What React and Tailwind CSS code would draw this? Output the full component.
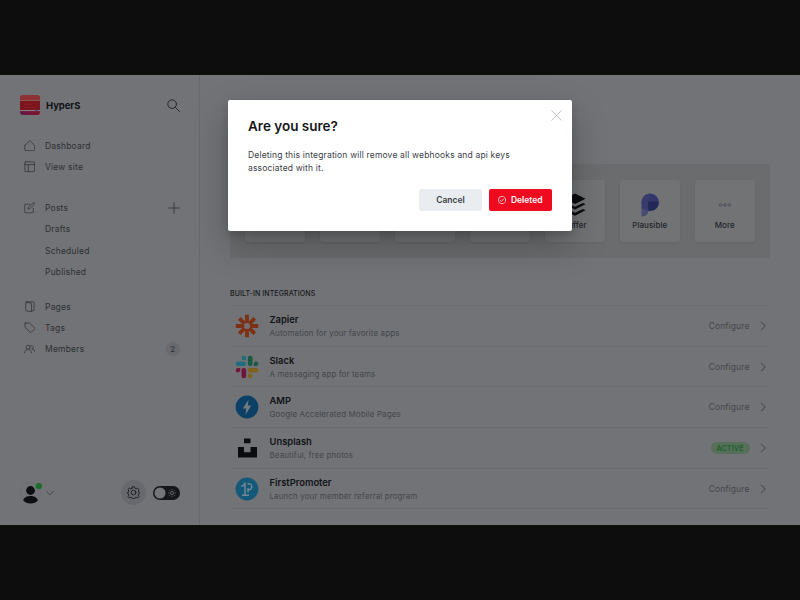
import React from "react";

function Icon({ size = 12, box = 24, sw = 1.5, className = "", children }) {
  return (
    <svg
      width={size}
      height={size}
      viewBox={`0 0 ${box} ${box}`}
      fill="none"
      stroke="currentColor"
      strokeWidth={sw}
      strokeLinecap="round"
      strokeLinejoin="round"
      className={`block shrink-0 ${className}`}
    >
      {children}
    </svg>
  );
}

const HomeIcon = () => (
  <Icon size={11.5}>
    <path d="M2.500 10.500 L10.500 2.600 a2.100 2.100 0 0 1 3 0 L21.500 10.500 a2 2 0 0 1 .8 1.600 V20 a2.300 2.300 0 0 1-2.300 2.300 H4 A2.300 2.300 0 0 1 1.700 20 V12.100 a2 2 0 0 1 .8-1.600z" />
  </Icon>
);
const LayoutIcon = () => (
  <Icon size={11.5}>
    <rect x="1.800" y="1.800" width="20.400" height="20.400" rx="2" />
    <path d="M1.800 7.500h20.400M9 7.500v14.700" />
  </Icon>
);
const PostIcon = () => (
  <Icon size={11.5}>
    <path d="M19.500 13v8a1.500 1.500 0 0 1-1.500 1.500H3A1.500 1.500 0 0 1 1.500 21V6A1.500 1.500 0 0 1 3 4.500h8.500" />
    <path d="M9.500 14.500l-1 0.500 1-4.500L19 1.800a1.800 1.800 0 0 1 2.700 2.500L12.500 13.500z" />
  </Icon>
);
const PagesIcon = () => (
  <Icon size={11.5}>
    <path d="M4.500 2.800l9.500 1.400a2 2 0 0 1 1.700 2V22.500l-10-1.600A2.200 2.200 0 0 1 3.500 18.700V3.500" />
    <path d="M4.500 1.800h14.500A2 2 0 0 1 21 3.800v14.900a2 2 0 0 1-2 2h-3.300" />
  </Icon>
);
const TagIcon = () => (
  <Icon size={11.5}>
    <path d="M3 2h7.500a2.500 2.500 0 0 1 1.700.7l9.800 10a1.500 1.500 0 0 1 0 2.100l-6.700 6.700a1.500 1.500 0 0 1-2.100 0L2.700 11.500a2.500 2.500 0 0 1-.7-1.700V3a1 1 0 0 1 1-1z" />
  </Icon>
);
const MembersIcon = () => (
  <Icon size={11.5}>
    <circle cx="8.500" cy="8.800" r="4.200" />
    <path d="M1 20.500c.3-4.400 3.300-6.800 7.500-6.800s7 2.400 7.300 6.800" />
    <path d="M14 5.500a3.700 3.700 0 1 1 2.200 7c4 0 6.500 2.500 6.800 6.500" />
  </Icon>
);

function NavItem({ icon, label, children }) {
  return (
    <div className="flex h-[21.2px] items-center text-[#2d3034]">
      <div className="w-[21.500px]">{icon}</div>
      <span className="flex-1 pt-[1.2px] text-[8.5px] tracking-[0.2px]">{label}</span>
      {children}
    </div>
  );
}

function Sidebar() {
  return (
    <aside className="flex w-[200px] shrink-0 flex-col border-r border-[#68696b] pt-5 pr-[19px] pl-5">
      <div className="flex h-5 items-center">
        <svg width="20" height="20" viewBox="0 0 20 20" className="block">
          <defs>
            <clipPath id="logo">
              <rect width="20" height="20" rx="3.500" />
            </clipPath>
            <linearGradient id="logobase" x1="0" x2="1">
              <stop offset="0" stopColor="#5d174b" />
              <stop offset="1" stopColor="#88132c" />
            </linearGradient>
          </defs>
          <g clipPath="url(#logo)">
            <rect width="20" height="20" fill="#87252b" />
            <rect width="20" height="5" fill="#8c3134" />
            <rect y="5" width="20" height="1" fill="#8c5855" />
            <rect y="6" width="20" height="9" fill="#7d151d" />
            <rect x="4" y="9" width="8" height="1" fill="#821e25" />
            <rect x="4" y="12" width="12" height="1" fill="#821e25" />
            <rect y="15" width="20" height="1.200" fill="#888088" />
            <rect x="15" y="15" width="3" height="1.200" fill="#355a9d" />
            <rect y="16.200" width="20" height="4" fill="url(#logobase)" />
          </g>
        </svg>
        <span className="ml-[6px] flex-1 pt-[1.5px] text-[9.5px] font-bold tracking-[-0.05px] text-[#111216]">HyperS</span>
        <Icon size={13} sw={1.700} className="text-[#202125]">
          <circle cx="9.500" cy="9.500" r="8" />
          <path d="M15.500 15.500l7.500 7.500" />
        </Icon>
      </div>
      <nav className="mt-[20px] pl-[3.500px]">
        <NavItem icon={<HomeIcon />} label="Dashboard" />
        <NavItem icon={<LayoutIcon />} label="View site" />
        <div className="h-5" />
        <NavItem icon={<PostIcon />} label="Posts">
          <Icon size={12} sw={1.700} className="text-[#303236]">
            <path d="M12 1.500v21M1.500 12h21" />
          </Icon>
        </NavItem>
        <NavItem label="Drafts" />
        <NavItem label="Scheduled" />
        <NavItem label="Published" />
        <div className="h-[13.800px]" />
        <NavItem icon={<PagesIcon />} label="Pages" />
        <NavItem icon={<TagIcon />} label="Tags" />
        <NavItem icon={<MembersIcon />} label="Members">
          <span className="flex h-[14.500px] w-[14.500px] items-center justify-center rounded-full bg-[#696a6d] pt-px text-[8px]">2</span>
        </NavItem>
      </nav>
      <div className="mt-auto mb-5 flex h-[25px] items-center">
        <svg width="22" height="22" viewBox="0 0 22 22" className="block shrink-0">
          <circle cx="10.500" cy="11" r="10.300" fill="none" stroke="#6c6d70" strokeWidth=".8" />
          <circle cx="10.500" cy="8.500" r="4.400" fill="#0d0e12" />
          <path d="M3.200 18.200c1.600-5.600 13-5.600 14.700 0-3.200 4.300-11.400 4.300-14.700 0z" fill="#0d0e12" />
          <circle cx="18.800" cy="4.100" r="3.200" fill="#1b6e2b" />
        </svg>
        <Icon size={8} sw={2.500} className="ml-1 text-[#3b3d41]">
          <path d="M2 7.500l10 10 10-10" />
        </Icon>
        <div className="ml-auto flex h-[25px] w-[25px] items-center justify-center rounded-full bg-[#68696e] text-[#191b20]">
          <Icon size={13} sw={1.700}>
            <circle cx="12" cy="12" r="4.300" />
            <path d="M10 1.500h4l1 3 1.800.8 2.800-1.400 2.500 2.500-1.400 2.800.8 1.800 1 .3v3.400l-1 .3-.8 1.800 1.400 2.800-2.500 2.500-2.800-1.400-1.800.8-1 2h-4l-1-2-1.800-.8-2.800 1.400-2.500-2.500 1.400-2.800-.8-1.800-1-.3v-3.400l1-.3.8-1.800-1.400-2.800 2.500-2.500 2.800 1.400L9 4.500z" />
          </Icon>
        </div>
        <svg width="27" height="14" viewBox="0 0 27 14" className="ml-[7px] block shrink-0">
          <rect width="27" height="14" rx="7" fill="#15161a" />
          <circle cx="7" cy="7" r="5.500" fill="#747579" />
          <circle cx="19" cy="7" r="1.500" fill="none" stroke="#66676a" strokeWidth=".9" />
          <path d="M19 3v1.400M19 9.600V11M15 7h1.400M21.600 7H23M16.200 4.200l1 1M20.800 8.800l1 1M21.800 4.200l-1 1M17.200 8.800l-1 1" stroke="#66676a" strokeWidth=".8" />
        </svg>
      </div>
    </aside>
  );
}

function Tile({ children, label }) {
  return (
    <div className="flex h-[62px] w-[59.500px] flex-col items-center rounded-[3px] bg-[#727375] pt-[11.500px] shadow-[0_1px_2px_rgba(0,0,0,0.08)]">
      <div className="flex h-[26px] items-center">{children}</div>
      <span className="text-[8px] leading-[14px] font-medium tracking-[0.05px] text-[#222429]">{label}</span>
    </div>
  );
}

const ZapierLogo = () => (
  <svg width="24" height="24" viewBox="-12 -12 24 24" className="block">
    <g stroke="#7e3014" strokeWidth="3.800">
      <path d="M0-11.200V-2.500M0 11.200V2.500M-11.200 0H-2.500M11.200 0H2.500M-7.700-7.700l5.500 5.500M7.700 7.700l-5.500-5.500M7.700-7.700l-5.500 5.500M-7.700 7.700l5.500-5.500" />
    </g>
    <path d="M-2.700-1.300L-1.300-2.700H1.300L2.700-1.300V1.300L1.300 2.700H-1.300L-2.700 1.300z" fill="#707174" />
  </svg>
);

const SlackLogo = () => (
  <svg width="24" height="24" viewBox="0 0 24 24" className="block">
    <g fill="#206d80">
      <rect x=".8" y="6.500" width="10.200" height="4.500" rx="2.200" />
      <path d="M11 5.200H8.700A2.200 2.200 0 1 1 11 3z" />
    </g>
    <g fill="#175b42">
      <rect x="12.900" y=".8" width="4.600" height="10.200" rx="2.200" />
      <path d="M18.800 11V8.700A2.200 2.200 0 1 1 21 11z" />
    </g>
    <g fill="#7d6019">
      <rect x="13" y="13" width="10.200" height="4.500" rx="2.200" />
      <path d="M13 18.800h2.300A2.200 2.200 0 1 1 13 21z" />
    </g>
    <g fill="#70143a">
      <rect x="6.500" y="13" width="4.600" height="10.200" rx="2.200" />
      <path d="M5.200 13v2.300A2.200 2.200 0 1 1 3 13z" />
    </g>
  </svg>
);

const AmpLogo = () => (
  <svg width="24" height="24" viewBox="0 0 24 24" className="block">
    <circle cx="12" cy="12" r="11.400" fill="#0b4166" />
    <path d="M13.500 4.800L7.800 13.500h3.400l-.7 6.200 5.700-9.200h-3.400z" fill="#77797c" />
  </svg>
);

const UnsplashLogo = () => (
  <svg width="24" height="24" viewBox="0 0 24 24" className="block">
    <path d="M9 2.500h6.500v4.800H9zM3 11h6v5.300h6.500V11h6.500V21.500H3z" fill="#0b0c0f" />
  </svg>
);

const PromoterLogo = () => (
  <svg width="24" height="24" viewBox="0 0 24 24" className="block">
    <circle cx="12" cy="12" r="11.400" fill="#14587a" />
    <g fill="none" stroke="#75888f" strokeWidth="1.500">
      <path d="M6.200 9.300c2.400-.3 3.500-1.600 3.800-3.600v12.200M7 18.200h7" />
      <path d="M13 15.500V11M12.500 6.800c5.500-1.300 5.500 6.700.8 6" />
    </g>
  </svg>
);

const integrations = [
  { name: "Zapier", text: "Automation for your favorite apps", logo: <ZapierLogo /> },
  { name: "Slack", text: "A messaging app for teams", logo: <SlackLogo /> },
  { name: "AMP", text: "Google Accelerated Mobile Pages", logo: <AmpLogo /> },
  { name: "Unsplash", text: "Beautiful, free photos", logo: <UnsplashLogo />, active: true },
  { name: "FirstPromoter", text: "Launch your member referral program", logo: <PromoterLogo /> },
];

function Row({ item }) {
  return (
    <div className="flex h-[40.700px] items-center border-t border-[#6c6d70] pr-[2px] pl-[5px]">
      {item.logo}
      <div className="ml-[10.500px] flex-1">
        <div className="text-[9.4px] leading-[15px] font-semibold text-[#111216]">{item.name}</div>
        <div className="text-[8px] leading-[13px] tracking-[0.100px] text-[#43474d]">{item.text}</div>
      </div>
      {item.active ? (
        <span className="flex h-[12px] w-[39px] items-center justify-center rounded-full bg-[#566f5a] pt-px text-[7.6px] font-medium text-[#175f26]">ACTIVE</span>
      ) : (
        <span className="pt-[1.2px] text-[8.5px] tracking-[0.120px] text-[#43474d]">Configure</span>
      )}
      <Icon size={10} sw={1.900} className="ml-[8px] text-[#35373b]">
        <path d="M8 2.500l9.500 9.500L8 21.500" />
      </Icon>
    </div>
  );
}

function Main() {
  return (
    <main className="flex-1 pt-[89px] pr-[30.500px] pl-[30px]">
      <div className="flex h-[93.5px] justify-between bg-[#6b6c6e] px-[15px] pt-4">
        <Tile />
        <Tile />
        <Tile />
        <Tile />
        <Tile label="Buffer">
          <svg width="22" height="24" viewBox="0 0 22 24" className="block" fill="#0c0d10">
            <path d="M11 .5l10.500 5.200L11 11 .5 5.700zM.5 11.200l2.600-1.300L11 13.700l7.900-3.800 2.600 1.300L11 16.600zM.5 17.300L3.100 16l7.900 3.800 7.900-3.800 2.600 1.300L11 22.800z" />
          </svg>
        </Tile>
        <Tile label="Plausible">
          <svg width="18" height="24" viewBox="0 0 18 24" className="block">
            <path d="M.5 16.500V23.500c4.300 0 7-2.500 7-6.500z" fill="#464a75" />
            <circle cx="9.200" cy="9.200" r="8.600" fill="#32366b" />
            <path d="M.5 16.500V9.200A8.600 8.600 0 0 1 9 .6L7.500 17c-2.600-.5-4.600-.7-7-.5z" fill="#383c6d" />
            <path d="M7 8.500h10.800a8.600 8.600 0 0 1-10.300 9.200z" fill="#242858" />
          </svg>
        </Tile>
        <Tile label="More">
          <svg width="14" height="6" viewBox="0 0 14 6" className="block" fill="none" stroke="#4e515e" strokeWidth="1">
            <circle cx="2.600" cy="3" r="1.300" />
            <circle cx="7" cy="3" r="1.300" />
            <circle cx="11.400" cy="3" r="1.300" />
          </svg>
        </Tile>
      </div>
      <h2 className="mt-[30.5px] h-[17px] text-[7px] leading-[11px] font-medium tracking-[0.100px] text-[#17181c]">BUILT-IN INTEGRATIONS</h2>
      <div className="border-b border-[#6c6d70]">
        {integrations.map((item) => (
          <Row key={item.name} item={item} />
        ))}
      </div>
    </main>
  );
}

function Dialog() {
  return (
    <div
      role="dialog"
      className="absolute top-[25px] left-[228px] flex h-[131px] w-[344px] flex-col rounded-[2px] bg-white pt-[18px] pr-5 pl-5 shadow-[0_4px_8px_rgba(0,0,0,0.15),0_14px_36px_rgba(0,0,0,0.24)]"
    >
      <h1 className="text-[13.5px] leading-[17px] font-semibold text-[#15171a]">Are you sure?</h1>
      <p className="mt-[14px] text-[8.5px] leading-[13px] tracking-[0.175px] text-[#394047]">
        Deleting this integration will remove all webhooks and api keys
        <br />
        associated with it.
      </p>
      <div className="mt-[14px] flex justify-end gap-[7px]">
        <button className="h-[21.500px] w-[63px] rounded-[2px] bg-[#e9edf0] pt-px text-[8.5px] font-semibold text-[#394047]">Cancel</button>
        <button className="flex h-[21.500px] w-[63px] items-center justify-center gap-[4.5px] rounded-[2px] bg-[#f00a20] text-[8.5px] font-semibold text-white">
          <Icon size={8} sw={2}>
            <circle cx="12" cy="12" r="11" />
            <path d="M6.500 12.500l3.700 4L18 8" />
          </Icon>
          <span className="pt-[1.2px]">Deleted</span>
        </button>
      </div>
      <Icon size={11} sw={1.800} className="absolute top-[10px] right-[10px] text-[#b4b8bb]">
        <path d="M1.500 1.500l21 21M22.500 1.500l-21 21" />
      </Icon>
    </div>
  );
}

export default function App() {
  return (
    <div className="flex h-[600px] w-[800px] flex-col overflow-hidden bg-[#0d0d0d] py-[75px] font-['Inter','Liberation_Sans',sans-serif]">
      <div className="relative flex h-[450px] overflow-hidden bg-[#727376]">
        <Sidebar />
        <Main />
        <Dialog />
      </div>
    </div>
  );
}
